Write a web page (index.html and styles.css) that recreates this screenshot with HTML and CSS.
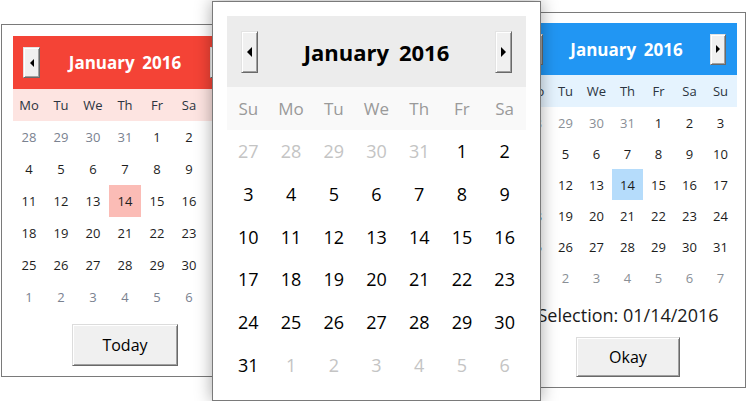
FILE: index.html
```html
<!DOCTYPE html>
<html>
<head>
<meta charset="utf-8">
<link rel="stylesheet" href="styles.css">
</head>
<body>
<div class="desk">
  <div class="win win-left">
    <div class="hdr">
      <div class="nav prev"></div>
      <div class="title"><span>January</span><span>2016</span></div>
      <div class="nav next"></div>
    </div>
    <div class="dows">
      <div>Mo</div><div>Tu</div><div>We</div><div>Th</div><div>Fr</div><div>Sa</div><div>Su</div>
    </div>
    <div class="days">
      <div class="o">28</div><div class="o">29</div><div class="o">30</div><div class="o">31</div><div>1</div><div>2</div><div>3</div>
      <div>4</div><div>5</div><div>6</div><div>7</div><div>8</div><div>9</div><div>10</div>
      <div>11</div><div>12</div><div>13</div><div class="sel">14</div><div>15</div><div>16</div><div>17</div>
      <div>18</div><div>19</div><div>20</div><div>21</div><div>22</div><div>23</div><div>24</div>
      <div>25</div><div>26</div><div>27</div><div>28</div><div>29</div><div>30</div><div>31</div>
      <div class="o">1</div><div class="o">2</div><div class="o">3</div><div class="o">4</div><div class="o">5</div><div class="o">6</div><div class="o">7</div>
    </div>
    <div class="foot">
      <div class="btn btn-today">Today</div>
    </div>
  </div>

  <div class="win win-right">
    <div class="hdr">
      <div class="nav prev"></div>
      <div class="title"><span>January</span><span>2016</span></div>
      <div class="nav next"></div>
    </div>
    <div class="dows">
      <div>Mo</div><div>Tu</div><div>We</div><div>Th</div><div>Fr</div><div>Sa</div><div>Su</div>
    </div>
    <div class="days">
      <div class="o">28</div><div class="o">29</div><div class="o">30</div><div class="o">31</div><div>1</div><div>2</div><div>3</div>
      <div>4</div><div>5</div><div>6</div><div>7</div><div>8</div><div>9</div><div>10</div>
      <div>11</div><div>12</div><div>13</div><div class="sel">14</div><div>15</div><div>16</div><div>17</div>
      <div>18</div><div>19</div><div>20</div><div>21</div><div>22</div><div>23</div><div>24</div>
      <div>25</div><div>26</div><div>27</div><div>28</div><div>29</div><div>30</div><div>31</div>
      <div class="o">1</div><div class="o">2</div><div class="o">3</div><div class="o">4</div><div class="o">5</div><div class="o">6</div><div class="o">7</div>
    </div>
    <div class="selection">Selection: 01/14/2016</div>
    <div class="foot">
      <div class="btn btn-okay">Okay</div>
    </div>
  </div>

  <div class="win win-center">
    <div class="hdr">
      <div class="nav prev"></div>
      <div class="title"><span>January</span><span>2016</span></div>
      <div class="nav next"></div>
    </div>
    <div class="dows">
      <div>Su</div><div>Mo</div><div>Tu</div><div>We</div><div>Th</div><div>Fr</div><div>Sa</div>
    </div>
    <div class="days">
      <div class="o">27</div><div class="o">28</div><div class="o">29</div><div class="o">30</div><div class="o">31</div><div>1</div><div>2</div>
      <div>3</div><div>4</div><div>5</div><div>6</div><div>7</div><div>8</div><div>9</div>
      <div>10</div><div>11</div><div>12</div><div>13</div><div>14</div><div>15</div><div>16</div>
      <div>17</div><div>18</div><div>19</div><div>20</div><div>21</div><div>22</div><div>23</div>
      <div>24</div><div>25</div><div>26</div><div>27</div><div>28</div><div>29</div><div>30</div>
      <div>31</div><div class="o">1</div><div class="o">2</div><div class="o">3</div><div class="o">4</div><div class="o">5</div><div class="o">6</div>
    </div>
  </div>
</div>
</body>
</html>
```
FILE: styles.css
```css
html, body {
  margin: 0;
  padding: 0;
  background: #ffffff;
}

body {
  font-family: "Open Sans", "Noto Sans", "DejaVu Sans", sans-serif;
  color: #1a1a1a;
}

.desk {
  position: relative;
  width: 748px;
  height: 401px;
  overflow: hidden;
}

.win {
  position: absolute;
  box-sizing: border-box;
  background: #ffffff;
  border: 1px solid #7a7a7a;
  display: flex;
  flex-direction: column;
}

.hdr {
  display: flex;
  align-items: center;
  justify-content: space-between;
  flex: none;
}

.title {
  flex: 1;
  display: flex;
  justify-content: center;
  gap: 0.45em;
  font-weight: 700;
}

.nav {
  box-sizing: border-box;
  flex: none;
  background: #f0f0f0;
  border: 1px solid;
  border-color: #e3e3e3 #696969 #696969 #e3e3e3;
  box-shadow: inset 1px 1px #ffffff, inset -1px -1px #a0a0a0;
  display: flex;
  align-items: center;
  justify-content: center;
}

.nav::before {
  content: "";
  width: 0;
  height: 0;
  border-style: solid;
}

.prev::before {
  border-width: 4px 4px 4px 0;
  border-color: transparent #000 transparent transparent;
}

.next::before {
  border-width: 4px 0 4px 4px;
  border-color: transparent transparent transparent #000;
}

.dows, .days {
  display: grid;
  flex: none;
}

.dows > div, .days > div {
  display: flex;
  align-items: center;
  justify-content: center;
}

.foot {
  display: flex;
  justify-content: center;
  flex: none;
}

.btn {
  box-sizing: border-box;
  background: #f0f0f0;
  border: 1px solid;
  border-color: #dcdcdc #696969 #696969 #dcdcdc;
  box-shadow: inset 1px 1px #ffffff, inset -1px -1px #a0a0a0;
  display: flex;
  align-items: center;
  justify-content: center;
  color: #000;
}

/* ---------- left (red) ---------- */
.win-left {
  left: 1px;
  top: 24px;
  width: 248px;
  height: 353px;
  padding: 11px 11px 10px;
  z-index: 1;
}

.win-left .hdr {
  height: 53px;
  padding: 0 10px;
  background: #f44336;
  color: #ffffff;
}

.win-left .title {
  font-size: 17px;
}

.win-left .nav {
  width: 17px;
  height: 31px;
}

.win-left .dows {
  grid-template-columns: repeat(7, 32px);
  grid-auto-rows: 32px;
  background: #fde4e1;
  font-size: 13px;
  color: #2b3440;
}

.win-left .days {
  grid-template-columns: repeat(7, 32px);
  grid-auto-rows: 32px;
  font-size: 13px;
  color: #1e1e1e;
}

.win-left .days .o {
  color: #7a8290;
}

.win-left .days .sel {
  background: #fbbcb6;
}

.win-left .foot {
  margin-top: 11px;
}

.btn-today {
  width: 106px;
  height: 42px;
  font-size: 16px;
}

/* ---------- right (blue) ---------- */
.win-right {
  left: 510px;
  top: 12px;
  width: 236px;
  height: 376px;
  padding: 10px 8px;
  z-index: 1;
}

.win-right .hdr {
  height: 52px;
  padding: 0 11px 0 8px;
  background: #2196f3;
  color: #ffffff;
}

.win-right .title {
  font-size: 17px;
}

.win-right .nav {
  width: 16px;
  height: 31px;
}

.win-right .dows {
  grid-template-columns: repeat(7, 31px);
  grid-auto-rows: 32px;
  background: #e5f3fe;
  font-size: 13px;
  color: #2b3440;
}

.win-right .days {
  grid-template-columns: repeat(7, 31px);
  grid-auto-rows: 31px;
  font-size: 13px;
  font-weight: 500;
  color: #1c1c1c;
}

.win-right .days .o {
  color: #8a8f96;
}

.win-right .days .sel {
  background: #b5dcfb;
}

.selection {
  height: 44px;
  display: flex;
  align-items: center;
  justify-content: center;
  font-size: 18px;
  color: #1a1a1a;
  flex: none;
}

.btn-okay {
  width: 104px;
  height: 40px;
  font-size: 16px;
}

/* ---------- center (gray) ---------- */
.win-center {
  left: 212px;
  top: 1px;
  width: 329px;
  height: 400px;
  padding: 14px;
  z-index: 2;
  box-shadow: 0 0 16px rgba(0, 0, 0, 0.35);
}

.win-center .hdr {
  height: 71px;
  padding: 0 14px;
  background: #ececec;
  color: #000000;
}

.win-center .title {
  font-size: 22px;
}

.win-center .nav {
  width: 17px;
  height: 42px;
}

.win-center .prev::before {
  border-width: 5px 5px 5px 0;
}

.win-center .next::before {
  border-width: 5px 0 5px 5px;
}

.win-center .dows {
  grid-template-columns: repeat(7, 1fr);
  grid-auto-rows: 43px;
  background: #f9f9f9;
  font-size: 17px;
  color: #9a9a9a;
}

.win-center .days {
  grid-template-columns: repeat(7, 1fr);
  grid-auto-rows: 42.666px;
  font-size: 18px;
  color: #000000;
}

.win-center .days .o {
  color: #c4c4c4;
}
```
